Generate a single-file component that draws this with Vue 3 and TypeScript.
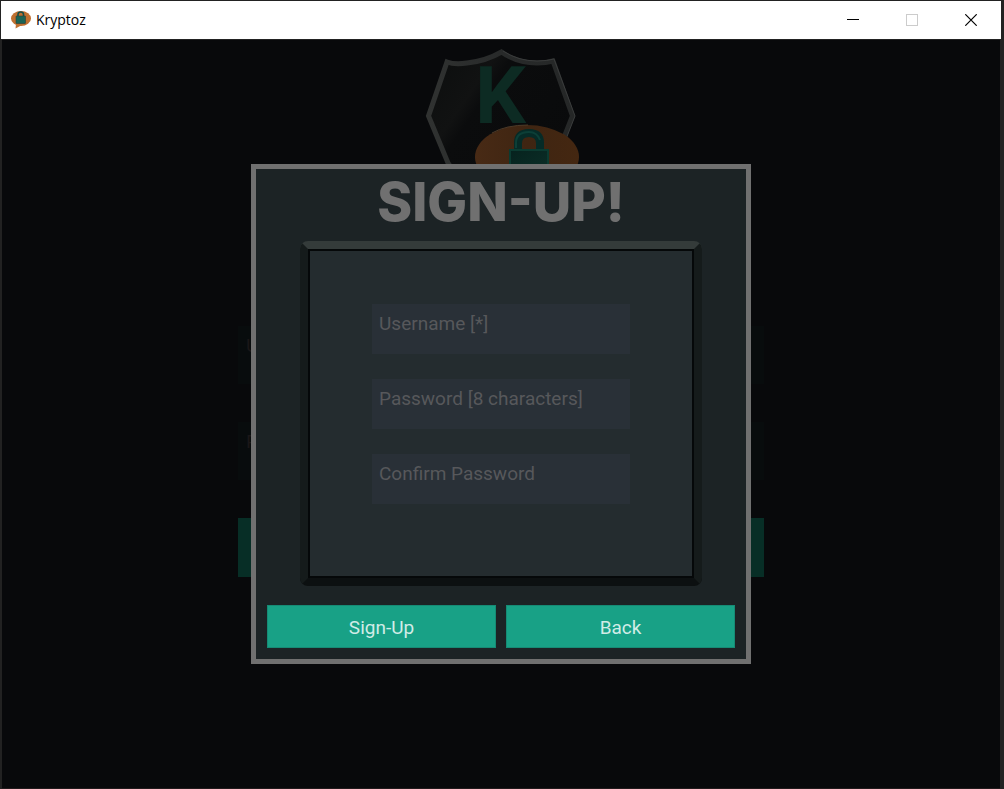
<script setup lang="ts">
import { reactive } from 'vue'

interface Field {
  key: 'username' | 'password' | 'confirm'
  hint: string
  type: string
}

const fields: Field[] = [
  { key: 'username', hint: 'Username [*]', type: 'text' },
  { key: 'password', hint: 'Password [8 characters]', type: 'password' },
  { key: 'confirm', hint: 'Confirm Password', type: 'password' },
]

const form = reactive({ username: '', password: '', confirm: '' })
</script>

<template>
  <div class="window">
    <header class="titlebar">
      <svg class="app-icon" width="20" height="20" viewBox="0 0 20 20" aria-hidden="true">
        <ellipse cx="10" cy="8.5" rx="10" ry="7.5" fill="#c07030" />
        <path d="M5 14 L4.5 18.5 L11 15 Z" fill="#c07030" />
        <path d="M7 7 V4.5 Q7 2 9.700 2 Q12.500 2 12.500 4.500 V7" fill="none" stroke="#174f49" stroke-width="1.6" />
        <rect x="5" y="6" width="9.500" height="7.500" rx="0.5" fill="#1b6455" stroke="#2b4038" stroke-width="0.6" />
      </svg>
      <span class="app-name">Kryptoz</span>
      <div class="controls">
        <button type="button" aria-label="Minimize">
          <svg width="12" height="12" viewBox="0 0 12 12"><path d="M0 5.5H12" stroke="#000" /></svg>
        </button>
        <button type="button" aria-label="Maximize" disabled>
          <svg width="12" height="12" viewBox="0 0 12 12"><rect x="0.5" y="0.5" width="11" height="11" fill="none" stroke="#ccc" /></svg>
        </button>
        <button type="button" aria-label="Close">
          <svg width="12" height="12" viewBox="0 0 12 12"><path d="M0.3 0.3L11.7 11.7M11.7 0.3L0.3 11.700" stroke="#000" stroke-width="1.200" /></svg>
        </button>
      </div>
    </header>

    <main class="stage">
      <section class="login" inert>
        <svg class="logo" width="162" height="160" viewBox="0 0 162 160" aria-hidden="true">
          <defs>
            <linearGradient id="shield" x1="0" y1="0.1" x2="1" y2="0.8">
              <stop offset="0" stop-color="#0c0e0e" />
              <stop offset="0.28" stop-color="#111212" />
              <stop offset="0.36" stop-color="#0b0c0d" />
              <stop offset="1" stop-color="#090a0b" />
            </linearGradient>
            <linearGradient id="rim" x1="0" y1="0" x2="1" y2="0">
              <stop offset="0" stop-color="#303231" />
              <stop offset="0.5" stop-color="#282a2a" />
              <stop offset="1" stop-color="#252727" />
            </linearGradient>
            <linearGradient id="bubble" x1="0" y1="0" x2="1" y2="0">
              <stop offset="0" stop-color="#482a15" />
              <stop offset="0.5" stop-color="#3f2512" />
              <stop offset="1" stop-color="#442711" />
            </linearGradient>
            <linearGradient id="lock" x1="0" y1="0" x2="1" y2="1">
              <stop offset="0" stop-color="#06221e" />
              <stop offset="1" stop-color="#0c3028" />
            </linearGradient>
          </defs>
          <path
            d="M81.500 8 Q97 19 117 19 Q126 19 133 17 L152.500 72 L134 119 Q122 140 81 154 Q40 140 28 119 L8.500 72 L27 18 Q35 21 47 19 Q66 17 81.500 8 Z"
            fill="url(#shield)" stroke="url(#rim)" stroke-width="5"
          />
          <path d="M83 7 Q98 17 117 17 Q127 17 134 15 L155 72 L137 118" fill="none" stroke="#3a3c3c" stroke-width="1" />
          <text class="monogram" x="55" y="79">K</text>
          <ellipse cx="107" cy="113" rx="52" ry="32" fill="url(#bubble)" />
          <path d="M72 89 Q86 81 108 81" fill="none" stroke="#4d3a28" stroke-width="1" />
          <path d="M98 106 V99 Q98 89 109 89 Q120 89 120 99 V106" fill="none" stroke="#062b27" stroke-width="8" />
          <path d="M96 104 V99 Q96 88 109 88 Q117 88 120 96" fill="none" stroke="#0c3f37" stroke-width="2" />
          <rect x="90" y="106" width="38" height="30" fill="url(#lock)" stroke="#0b3b31" stroke-width="2" />
        </svg>
        <form class="login-form" @submit.prevent>
          <input type="text" placeholder="Username" aria-label="Login username" />
          <input type="password" placeholder="Password" aria-label="Login password" />
          <button type="submit" aria-label="Login"></button>
        </form>
      </section>

      <div class="overlay">
        <form class="dialog" role="dialog" aria-labelledby="dialog-title" @submit.prevent>
          <h1 id="dialog-title">SIGN-UP!</h1>
          <div class="panel">
            <div class="panel-inner">
              <input
                v-for="field in fields"
                :key="field.key"
                v-model="form[field.key]"
                :type="field.type"
                :placeholder="field.hint"
                :aria-label="field.hint"
              />
            </div>
          </div>
          <div class="actions">
            <button type="submit">Sign-Up</button>
            <button type="button">Back</button>
          </div>
        </form>
      </div>
    </main>
  </div>
</template>

<style>
body {
  margin: 0;
  background: #222222;
}
</style>

<style scoped>
.window {
  box-sizing: border-box;
  display: flex;
  flex-direction: column;
  min-height: 100vh;
  padding: 1px 3px 0 1px;
  background: #222222;
  font-family: Roboto, "Liberation Sans", sans-serif;
}

.titlebar {
  display: flex;
  align-items: center;
  height: 38px;
  padding: 0 1px 0 10px;
  background: #ffffff;
}

.app-name {
  margin-left: 5px;
  font-family: "Open Sans", "Noto Sans", sans-serif;
  font-size: 14px;
  line-height: 20px;
  color: #000000;
}

.controls {
  display: flex;
  align-self: stretch;
  margin-left: auto;
}

.controls button {
  display: flex;
  align-items: center;
  justify-content: center;
  width: 59px;
  padding: 0;
  border: 0;
  background: transparent;
}

.stage {
  position: relative;
  display: flex;
  flex: 1;
  justify-content: center;
  margin: 1px 1px 0;
  border-bottom: 1px solid #211a1c;
  background: #08090b;
}

.login {
  display: flex;
  flex-direction: column;
  align-items: center;
  width: 526px;
  padding-top: 4px;
}

.monogram {
  font-family: Roboto, sans-serif;
  font-size: 80px;
  font-weight: 700;
  fill: #0d2b23;
}

.login-form {
  display: flex;
  flex-direction: column;
  gap: 38px;
  width: 100%;
  margin-top: 122px;
}

.login-form input {
  box-sizing: border-box;
  height: 58px;
  padding: 6px 8px 26px;
  border: 0;
  background: #080c0d;
  font: 19px/26px Roboto, sans-serif;
}

.login-form input::placeholder {
  color: #1a1718;
  opacity: 1;
}

.login-form button {
  height: 59px;
  border: 0;
  background: #072e26;
}

.overlay {
  position: absolute;
  inset: 0;
  display: flex;
  align-items: center;
  justify-content: center;
}

.dialog {
  box-sizing: border-box;
  width: 500px;
  max-width: 100%;
  padding: 0 11px 11px;
  border: 5px solid #707070;
  background: #1c2325;
}

h1 {
  margin: 0;
  font-family: Inter, "Open Sans", sans-serif;
  font-size: 53px;
  font-weight: 800;
  line-height: 66px;
  text-align: center;
  color: #707070;
}

.panel {
  margin: 6px 33px 19px;
  border: 8px solid;
  border-color: #343b3a #151b1b #0c1011;
  border-radius: 8px;
}

.panel-inner {
  display: flex;
  flex-direction: column;
  gap: 25px;
  padding: 53px 62px 72px;
  border: 2px solid #050809;
  background: #242c2f;
}

.panel-inner input {
  box-sizing: border-box;
  width: 100%;
  height: 50px;
  padding: 6px 7px 18px;
  border: 0;
  outline: 0;
  background: #293037;
  font: 19px/26px Roboto, sans-serif;
  color: #b0b0b0;
}

.panel-inner input::placeholder {
  color: #57585b;
  opacity: 1;
}

.actions {
  display: grid;
  grid-template-columns: 1fr 1fr;
  gap: 10px;
}

.actions button {
  height: 43px;
  padding: 2px 0 0;
  border: 1px solid #168b75;
  background: #18a186;
  font: 19px/24px Roboto, sans-serif;
  color: #d1ece6;
}
</style>
